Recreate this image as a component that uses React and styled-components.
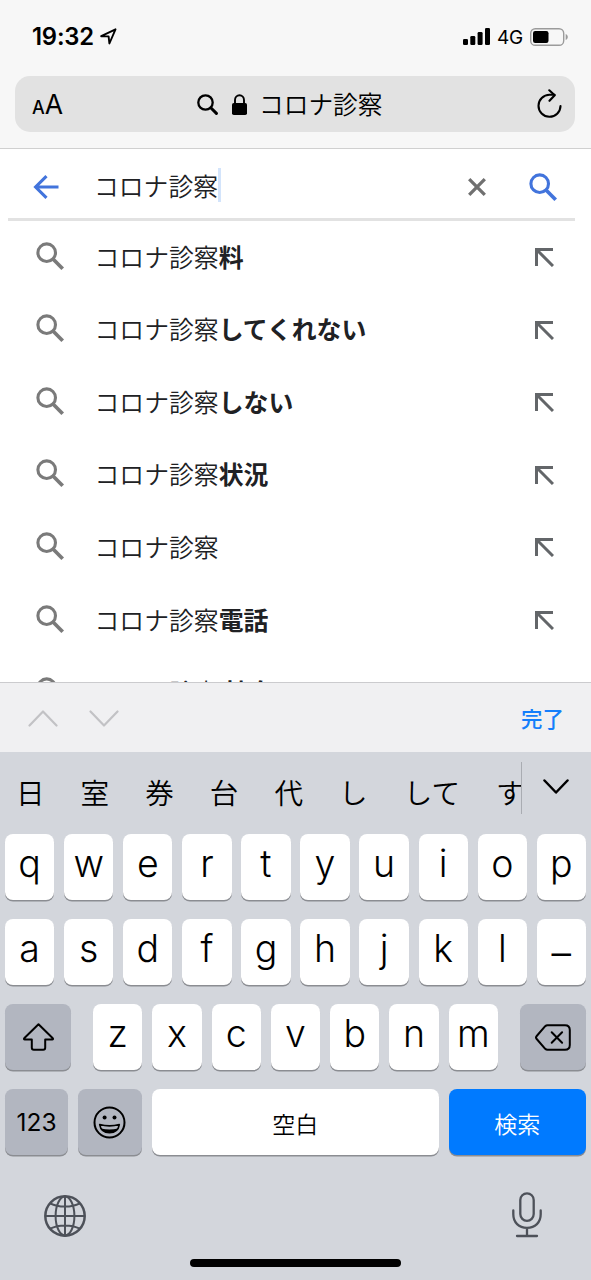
import React from "react";
import styled, { createGlobalStyle } from "styled-components";

const GlobalStyle = createGlobalStyle`
  *, *::before, *::after { box-sizing: border-box; }
  body { margin: 0; }
  svg { display: block; flex: none; }
`;

const latin = `Inter, "Noto Sans CJK JP", sans-serif`;
const japanese = `"Noto Sans CJK JP", Inter, sans-serif`;

const Screen = styled.div`
  width: 591px;
  height: 1280px;
  display: flex;
  flex-direction: column;
  overflow: hidden;
  background: #fff;
  font-family: ${japanese};
  color: #000;
`;

/* ---------- browser chrome ---------- */

const BrowserHeader = styled.header`
  flex: none;
  height: 149px;
  padding: 0 16px 0 15px;
  background: #f7f7f7;
  border-bottom: 1px solid #d0d0d0;
`;

const StatusBar = styled.div`
  height: 76px;
  padding: 0 7px 3px 17px;
  display: flex;
  align-items: center;
  font-family: ${latin};
`;

const Clock = styled.span`
  width: 62px;
  font-size: 23.8px;
  font-weight: 600;
  letter-spacing: -0.2px;
  margin-right: 6px;
  white-space: nowrap;
`;

const StatusRight = styled.div`
  margin-left: auto;
  display: flex;
  align-items: center;
`;

const Network = styled.span`
  width: 25px;
  margin: 2px 8px 0 7px;
  font-size: 19px;
  font-weight: 400;
  letter-spacing: -0.2px;
  line-height: 22px;
`;

const AddressBar = styled.div`
  height: 56px;
  padding: 0 13px 0 17px;
  display: flex;
  align-items: center;
  border-radius: 15px;
  background: #e2e2e2;
`;

const TextSize = styled.div`
  width: 165px;
  font-family: ${latin};
  font-size: 26.5px;
  line-height: 56px;
  padding-top: 4px;
  small { font-size: 18px; font-weight: 500; }
`;

const AddressText = styled.span`
  margin: -3px auto 0 12px;
  font-size: 24.7px;
  line-height: 56px;
  font-weight: 350;
`;

/* ---------- search page ---------- */

const SearchField = styled.div`
  flex: none;
  height: 72px;
  margin: 0 16px 0 8px;
  padding: 7px 18px 0 25px;
  display: flex;
  align-items: center;
  border-bottom: 3px solid #e2e2e2;
`;

const Query = styled.span`
  height: 34px;
  margin: -5px auto 0 35px;
  padding-top: 1px;
  display: flex;
  align-items: center;
  font-size: 24.8px;
  line-height: 33px;
  font-weight: 350;
  color: #202124;
  border-right: 3px solid #d3e4fb;
`;

const ClearSlot = styled.div`
  margin-right: 43px;
`;

const Suggestions = styled.ul`
  flex: none;
  height: 461px;
  margin: 0;
  padding: 0;
  list-style: none;
  overflow: hidden;
`;

const Suggestion = styled.li`
  height: 72.55px;
  padding: 0 37.5px 0 36px;
  display: flex;
  align-items: center;
`;

const IconSlot = styled.div`
  padding-bottom: 3px;
`;

const SuggestionText = styled.span`
  margin: -3px auto 0 30.5px;
  font-size: 24.85px;
  line-height: 36px;
  font-weight: 350;
  color: #202124;
  white-space: pre;
  b { font-weight: 700; }
`;

/* ---------- keyboard ---------- */

const Accessory = styled.div`
  flex: none;
  height: 70px;
  padding: 1px 27px 0 28px;
  display: flex;
  align-items: center;
  gap: 30.5px;
  background: #f0f0f2;
  border-top: 1px solid #cbcbce;
`;

const Done = styled.span`
  margin: -2px 0 0 auto;
  font-size: 21.5px;
  font-weight: 500;
  color: #147efb;
`;

const Keyboard = styled.section`
  flex: 1;
  display: flex;
  flex-direction: column;
  background: #d3d6dc;
`;

const CandidateBar = styled.div`
  height: 82px;
  display: flex;
  padding-top: 10px;
`;

const CandidateList = styled.div`
  width: 521.5px;
  height: 52px;
  display: flex;
  overflow: hidden;
  border-right: 1.5px solid #a9acb2;
`;

const Candidate = styled.span`
  flex: none;
  padding: 4px 18px 0;
  font-size: 28.6px;
  line-height: 52px;
  font-weight: 350;
  &:first-child { margin-left: -2px; }
`;

const Expand = styled.div`
  padding: 17px 0 0 21.5px;
`;

const KeyRow = styled.div`
  height: 66px;
  margin: 0 5px 19px;
  display: flex;
  justify-content: space-between;
`;

const LetterGroup = styled.div`
  width: 405px;
  display: flex;
  justify-content: space-between;
`;

const tones = {
  light: "background:#fff;color:#000;",
  dark: "background:#b2b6c0;color:#000;",
  blue: "background:#007aff;color:#fff;",
};

const Key = styled.div`
  flex: none;
  width: ${(p) => p.$w || 49.3}px;
  height: 66px;
  display: flex;
  align-items: center;
  justify-content: center;
  border-radius: 8px;
  box-shadow: 0 1.5px 0 #8b8d92;
  ${(p) => tones[p.$tone || "light"]}
`;

const Letter = styled.span`
  padding-bottom: 6px;
  font-family: ${latin};
  font-size: 37.5px;
  line-height: 56px;
  font-weight: 300;
`;

const Dash = styled.span`
  font-family: ${latin};
  font-size: 39px;
  line-height: 56px;
  font-weight: 300;
  padding-top: 2px;
`;

const KeyLabel = styled.span`
  font-family: ${(p) => (p.$latin ? latin : japanese)};
  font-size: ${(p) => (p.$latin ? 24.5 : 23)}px;
  font-weight: ${(p) => (p.$latin ? 400 : 350)};
  line-height: 34px;
  padding-top: ${(p) => (p.$latin ? 0 : 1)}px;
`;

const KeyboardFooter = styled.div`
  height: 64px;
  margin-top: 21px;
  padding: 0 49px 0 44px;
  display: flex;
  flex: none;
  align-items: flex-start;
  justify-content: space-between;
`;

const HomeIndicator = styled.div`
  flex: none;
  width: 211px;
  height: 8px;
  margin-left: 190px;
  border-radius: 4px;
  background: #000;
`;

const MicSlot = styled.div`
  margin-top: -3px;
`;

/* ---------- icons ---------- */

const Magnifier = ({ color, w = 3.1 }) => (
  <svg width="28" height="28" viewBox="0 0 28 28" fill="none" stroke={color} strokeWidth={w}>
    <circle cx="10.7" cy="10.7" r="8.8" />
    <path d="M17 17l9.7 9.7" strokeWidth={w + 0.6} />
  </svg>
);

const SmallMagnifier = () => (
  <svg width="21" height="21" viewBox="0 0 21 21" fill="none" stroke="#000" strokeWidth="2.3">
    <circle cx="8.5" cy="8.5" r="7.2" />
    <path d="M13.8 13.8l5.6 5.6" strokeWidth="3" strokeLinecap="round" />
  </svg>
);

const LockSvg = styled.svg`
  margin-left: 14px;
`;

const Lock = () => (
  <LockSvg width="15" height="21" viewBox="0 0 15 21">
    <rect x="0" y="9" width="15" height="12" rx="1.8" />
    <path d="M3 10V6a4.5 4.8 0 0 1 9 0v4" fill="none" stroke="#000" strokeWidth="1.9" />
  </LockSvg>
);

const Location = () => (
  <svg width="17" height="17" viewBox="0 0 17 17" fill="none" stroke="#000" strokeWidth="1.9" strokeLinejoin="round">
    <path d="M1.2 8.2L15.5 1.3 9.4 15.5 8.6 8.4z" />
  </svg>
);

const Signal = () => (
  <svg width="27" height="17" viewBox="0 0 27 17">
    <rect x="0" y="11" width="5" height="6" rx="1.3" />
    <rect x="7.3" y="8" width="5" height="9" rx="1.3" />
    <rect x="14.6" y="4" width="5" height="13" rx="1.3" />
    <rect x="22" y="0" width="5" height="17" rx="1.3" />
  </svg>
);

const Battery = () => (
  <svg width="38" height="18" viewBox="0 0 38 18">
    <rect x="0.7" y="0.7" width="33" height="16.6" rx="4.6" fill="none" stroke="#9b9b9b" strokeWidth="1.4" />
    <rect x="3" y="3" width="15.5" height="12" rx="2.2" />
    <path d="M35.7 6v6c1.3-.5 2.1-1.6 2.1-3s-.8-2.5-2.1-3z" fill="#9b9b9b" />
  </svg>
);

const Reload = () => (
  <svg width="25" height="30" viewBox="0 0 25 30" fill="none" stroke="#000" strokeWidth="2.1" strokeLinecap="round" strokeLinejoin="round">
    <path d="M23.5 17a11 11 0 1 1-11-11.2h5" />
    <path d="M12.3 1.3l5.4 4.9-5.2 5.6" />
  </svg>
);

const BackArrow = () => (
  <svg width="26" height="24" viewBox="0 0 26 24" fill="none" stroke="#4274dc" strokeWidth="3.1">
    <path d="M25.5 12H3M13.5 1.2L2.6 12l10.9 10.8" />
  </svg>
);

const Cross = () => (
  <svg width="18" height="18" viewBox="0 0 18 18" stroke="#707070" strokeWidth="3.3">
    <path d="M1.2 1.2l15.6 15.6M16.8 1.2L1.2 16.8" />
  </svg>
);

const Insert = () => (
  <svg width="20" height="20" viewBox="0 0 20 20" fill="none" stroke="#636669" strokeWidth="3">
    <path d="M19 2.5H2.5V19M3 3l16 16" />
  </svg>
);

const Chevron = ({ w, h, color, stroke, up }) => (
  <svg width={w} height={h} viewBox={`0 0 ${w} ${h}`} fill="none" stroke={color} strokeWidth={stroke} strokeLinecap="round" strokeLinejoin="round">
    <path d={up ? `M1.5 ${h - 1.5}L${w / 2} 1.5L${w - 1.5} ${h - 1.5}` : `M1.5 1.5L${w / 2} ${h - 1.5}L${w - 1.5} 1.5`} />
  </svg>
);

const Shift = () => (
  <svg width="31" height="28" viewBox="0 0 31 28" fill="none" stroke="#000" strokeWidth="2" strokeLinejoin="round">
    <path d="M15.5 1.2L1.2 15.3c-.5.6-.2 1.1.5 1.1h7.1v8.4c0 1.3.7 2 2 2h9.4c1.3 0 2-.7 2-2v-8.4h7.1c.7 0 1-.5.5-1.1z" />
  </svg>
);

const Backspace = () => (
  <svg width="36" height="27" viewBox="0 0 36 27" fill="none" stroke="#000" strokeWidth="2" strokeLinecap="round" strokeLinejoin="round">
    <path d="M12.5 1.2H30c3 0 4.8 1.8 4.8 4.8v15c0 3-1.8 4.8-4.8 4.8H12.5c-1 0-1.7-.4-2.3-1L1.7 15c-1-1.1-1-1.9 0-3l8.5-9.8c.6-.6 1.3-1 2.3-1z" />
    <path d="M16.7 8.3l10.4 10.4M27.1 8.3L16.7 18.7" />
  </svg>
);

const Smiley = () => (
  <svg width="33" height="33" viewBox="0 0 33 33">
    <circle cx="16.5" cy="16.5" r="15" fill="none" stroke="#000" strokeWidth="2" />
    <circle cx="11.6" cy="11.5" r="2" />
    <circle cx="21.5" cy="11.5" r="2" />
    <path d="M6.7 18.6c6.2 1.6 13.4 1.6 19.6 0-.8 5.2-4.6 8-9.8 8s-9-2.8-9.8-8z" fill="none" stroke="#000" strokeWidth="1.6" strokeLinejoin="round" />
    <path d="M8 22.5c5.5 1.4 11.5 1.4 17 0-1.6 3-4.5 4.3-8.5 4.3S9.6 25.5 8 22.5z" />
  </svg>
);

const Globe = () => (
  <svg width="42" height="42" viewBox="0 0 42 42" fill="none" stroke="#4d5159" strokeWidth="2">
    <circle cx="21" cy="21" r="19.7" strokeWidth="2.5" />
    <ellipse cx="21" cy="21" rx="9.4" ry="19.5" />
    <path d="M21 1.5v39M1.5 21h39M6.2 8.3c8.2 4.3 21.4 4.3 29.6 0M6.2 33.7c8.2-4.3 21.4-4.3 29.6 0" />
  </svg>
);

const Mic = () => (
  <svg width="30" height="46" viewBox="0 0 30 46" fill="none" stroke="#4d5159" strokeWidth="2.3" strokeLinecap="round">
    <rect x="8.3" y="1.3" width="13.4" height="27.5" rx="6.7" />
    <path d="M1.3 18.5v3.7c0 8.2 5.5 13.6 13.7 13.6s13.7-5.4 13.7-13.6v-3.7M15 36v7.7M5 44h20" />
  </svg>
);

const suggestions = ["料", "してくれない", "しない", "状況", "", "電話", " 神奈川"];
const candidates = ["日", "室", "券", "台", "代", "し", "して", "す"];

const Letters = ({ chars }) =>
  chars.split("").map((c) => (
    <Key key={c}>
      <Letter>{c}</Letter>
    </Key>
  ));

export default function App() {
  return (
    <Screen>
      <GlobalStyle />
      <BrowserHeader>
        <StatusBar>
          <Clock>19:32</Clock>
          <Location />
          <StatusRight>
            <Signal />
            <Network>4G</Network>
            <Battery />
          </StatusRight>
        </StatusBar>
        <AddressBar>
          <TextSize><small>A</small>A</TextSize>
          <SmallMagnifier />
          <Lock />
          <AddressText>コロナ診察</AddressText>
          <Reload />
        </AddressBar>
      </BrowserHeader>

      <SearchField>
        <BackArrow />
        <Query>コロナ診察</Query>
        <ClearSlot><Cross /></ClearSlot>
        <Magnifier color="#4274dc" />
      </SearchField>
      <Suggestions>
        {suggestions.map((s) => (
          <Suggestion key={s}>
            <IconSlot><Magnifier color="#7a7a7a" /></IconSlot>
            <SuggestionText>コロナ診察<b>{s}</b></SuggestionText>
            <Insert />
          </Suggestion>
        ))}
      </Suggestions>

      <Accessory>
        <Chevron w={30} h={17} color="#c2c2c5" stroke={2.2} up />
        <Chevron w={30} h={17} color="#c2c2c5" stroke={2.2} />
        <Done>完了</Done>
      </Accessory>
      <Keyboard>
        <CandidateBar>
          <CandidateList>
            {candidates.map((c) => <Candidate key={c}>{c}</Candidate>)}
          </CandidateList>
          <Expand><Chevron w={26} h={15} color="#000" stroke={2.5} /></Expand>
        </CandidateBar>
        <KeyRow><Letters chars="qwertyuiop" /></KeyRow>
        <KeyRow>
          <Letters chars="asdfghjkl" />
          <Key><Dash>–</Dash></Key>
        </KeyRow>
        <KeyRow>
          <Key $w={66} $tone="dark"><Shift /></Key>
          <LetterGroup><Letters chars="zxcvbnm" /></LetterGroup>
          <Key $w={66} $tone="dark"><Backspace /></Key>
        </KeyRow>
        <KeyRow>
          <Key $w={63} $tone="dark"><KeyLabel $latin>123</KeyLabel></Key>
          <Key $w={64.5} $tone="dark"><Smiley /></Key>
          <Key $w={287.5}><KeyLabel>空白</KeyLabel></Key>
          <Key $w={137.5} $tone="blue"><KeyLabel>検索</KeyLabel></Key>
        </KeyRow>
        <KeyboardFooter>
          <Globe />
          <MicSlot><Mic /></MicSlot>
        </KeyboardFooter>
        <HomeIndicator />
      </Keyboard>
    </Screen>
  );
}
